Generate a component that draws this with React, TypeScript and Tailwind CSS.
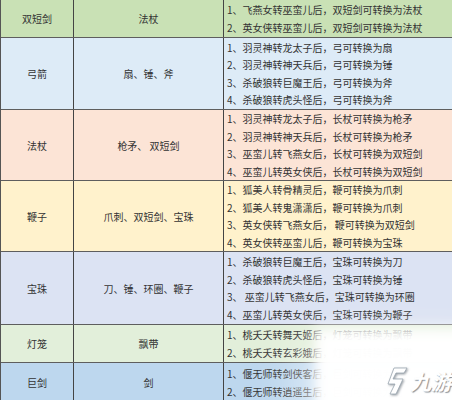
import React from 'react';

type Row = {
  from: string;
  to: string;
  lines: string[];
  bg: string;
  h: string;
};

const rows: Row[] = [
  {
    from: '双短剑',
    to: '法杖',
    lines: ['1、飞燕女转巫蛮儿后，双短剑可转换为法杖', '2、英女侠转巫蛮儿后，双短剑可转换为法杖'],
    bg: 'bg-[#c9e1b5]',
    h: 'h-[38px]',
  },
  {
    from: '弓箭',
    to: '扇、锤、斧',
    lines: [
      '1、羽灵神转龙太子后，弓可转换为扇',
      '2、羽灵神转神天兵后，弓可转换为锤',
      '3、杀破狼转巨魔王后，弓可转换为斧',
      '4、杀破狼转虎头怪后，弓可转换为斧',
    ],
    bg: 'bg-[#ddebf7]',
    h: 'h-[72px]',
  },
  {
    from: '法杖',
    to: '枪矛、 双短剑',
    lines: [
      '1、羽灵神转龙太子后，长杖可转换为枪矛',
      '2、羽灵神转神天兵后，长杖可转换为枪矛',
      '3、巫蛮儿转飞燕女后，长杖可转换为双短剑',
      '4、巫蛮儿转英女侠后，长杖可转换为双短剑',
    ],
    bg: 'bg-[#fce4d6]',
    h: 'h-[71px]',
  },
  {
    from: '鞭子',
    to: '爪刺、双短剑、宝珠',
    lines: [
      '1、狐美人转骨精灵后，鞭可转换为爪刺',
      '2、狐美人转鬼潇潇后，鞭可转换为爪刺',
      '3、英女侠转飞燕女后， 鞭可转换为双短剑',
      '4、英女侠转巫蛮儿后，鞭可转换为宝珠',
    ],
    bg: 'bg-[#fff2cc]',
    h: 'h-[71px]',
  },
  {
    from: '宝珠',
    to: '刀、锤、环圈、鞭子',
    lines: [
      '1、杀破狼转巨魔王后，宝珠可转换为刀',
      '2、杀破狼转虎头怪后，宝珠可转换为锤',
      '3、 巫蛮儿转飞燕女后，宝珠可转换为环圈',
      '4、巫蛮儿转英女侠后，宝珠可转换为鞭子',
    ],
    bg: 'bg-[#dce3f3]',
    h: 'h-[73px]',
  },
  {
    from: '灯笼',
    to: '飘带',
    lines: ['1、桃夭夭转舞天姬后，灯笼可转换为飘带', '2、桃夭夭转玄彩娥后，灯笼可转换为飘带'],
    bg: 'bg-[#e2efda]',
    h: 'h-[38px]',
  },
  {
    from: '巨剑',
    to: '剑',
    lines: ['1、偃无师转剑侠客后，巨剑可转换为剑', '2、偃无师转逍遥生后，巨剑可转换为剑'],
    bg: 'bg-[#bdd7ee]',
    h: 'h-[40px]',
  },
];

const JiuyouLogo = () => (
  <div className="absolute left-[384px] top-[366px] flex items-center gap-[2px]">
    <svg width="24" height="30" viewBox="0 0 24 30" className="drop-shadow-[1px_1px_1px_rgba(90,100,110,0.6)]">
      <path d="M10 2 L23 2 L20 7 L12 7 L9 13 L19 13 L12 28 L6 28 L11 18 L4 18 Z" fill="#ffffff" stroke="#9aa6b0" strokeWidth="0.8" />
    </svg>
    <span className="text-[21px] font-bold italic text-white leading-none [text-shadow:1px_1px_1px_rgba(90,100,110,0.7)]">
      九游
    </span>
  </div>
);

export default function App() {
  return (
    <div
      className="relative w-[452px] h-[400px] overflow-hidden bg-white text-[#333] text-[10px]"
      style={{ fontFamily: '"Noto Sans CJK SC", "Noto Sans", sans-serif' }}
    >
      <div className="border-l border-[#555]">
        {rows.map((r, i) => (
          <div key={i} className={`grid grid-cols-[73px_150px_1fr] border-b border-[#5e5e5e] ${r.bg} ${r.h}`}>
            <div className="flex items-center justify-center border-r border-[#444]">{r.from}</div>
            <div className="flex items-center justify-center border-r border-[#444]">{r.to}</div>
            <div className="flex flex-col justify-center pl-[3px] leading-[17.5px] whitespace-nowrap">
              {r.lines.map((l, j) => (
                <div key={j}>{l}</div>
              ))}
            </div>
          </div>
        ))}
      </div>
      {/* watermark haze */}
      <div className="absolute left-[320px] top-[334px] w-[150px] h-[90px] bg-white/95 blur-[4px]" />
      <div className="absolute left-[314px] top-[326px] w-[160px] h-[90px] bg-white/70 blur-[6px]" />
      <div className="absolute left-[300px] top-[345px] w-[180px] h-[80px] bg-white/60 blur-xl" />
      <JiuyouLogo />
    </div>
  );
}
